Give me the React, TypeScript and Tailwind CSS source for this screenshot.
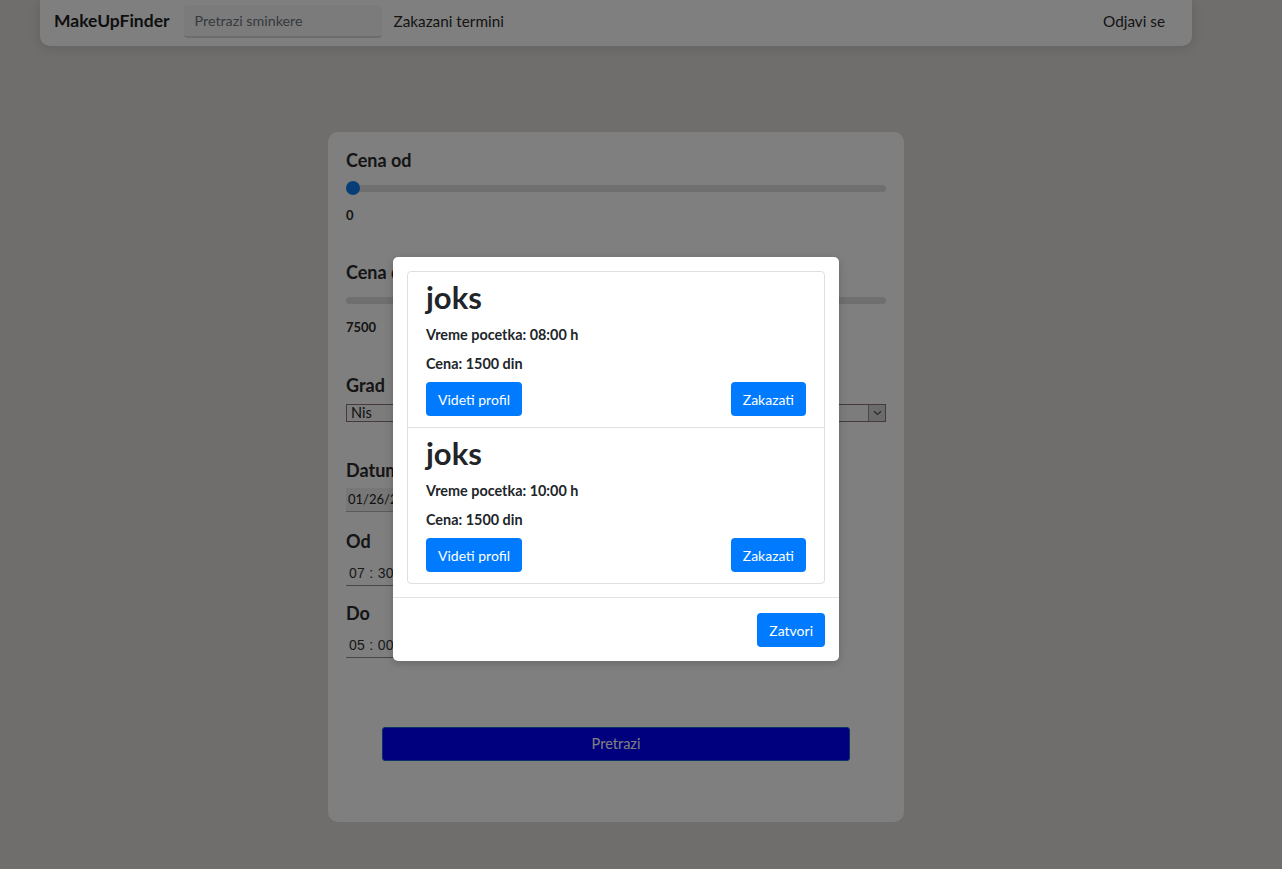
import React from 'react';

type Termin = {
  id: number;
  ime: string;
  vreme: string;
  cena: number;
};

const termini: Termin[] = [
  { id: 1, ime: 'joks', vreme: '08:00', cena: 1500 },
  { id: 2, ime: 'joks', vreme: '10:00', cena: 1500 },
];

// simple range look-alike, value as a fraction of the track
function Slider({ value }: { value: number }) {
  return (
    <div className="relative h-[14px] flex items-center">
      <div className="w-full h-[7px] rounded-full bg-[#dedede]" />
      <div
        className="absolute top-0 h-[14px] w-[14px] rounded-full bg-[#0f7bf0]"
        style={{ left: `calc(${value * 100}% - ${value * 14}px)` }}
      />
    </div>
  );
}

function Label({ children, className = '' }: { children: React.ReactNode; className?: string }) {
  return <div className={`text-[18px] font-bold leading-[20px] text-[#2a2a2a] ${className}`}>{children}</div>;
}

export default function App() {
  return (
    <div className="relative h-[869px] w-full overflow-hidden bg-[#dedcd8] font-['Lato',sans-serif]">
      {/* navbar */}
      <nav className="ml-[40px] w-[1152px] h-[46px] bg-white rounded-b-[10px] shadow-[0_2px_12px_rgba(0,0,0,0.12)] flex items-center pl-[14px] pr-[27px] pb-[3px]">
        <span className="text-[17.5px] font-bold text-[#1e1e1e]">MakeUpFinder</span>
        <div className="ml-[14px] w-[198px] h-[33px] bg-[#f6f6f6] rounded-[4px] border-b-2 border-[#d8d8d8] flex items-center px-[11px] text-[14.3px] text-[#6c757d]">
          Pretrazi sminkere
        </div>
        <span className="ml-[12px] text-[15.3px] text-[#2a2a2a]">Zakazani termini</span>
        <span className="ml-auto text-[15.3px] text-[#2a2a2a]">Odjavi se</span>
      </nav>

      {/* search form */}
      <div className="mt-[86px] ml-[328px] w-[576px] h-[690px] bg-white rounded-[10px] px-[18px] pt-[18px]">
        <Label>Cena od</Label>
        <div className="mt-[11px]">
          <Slider value={0} />
        </div>
        <div className="mt-[12px] h-[16px] text-[13px] font-bold leading-[16px] text-[#2a2a2a]">0</div>

        <Label className="mt-[39px]">Cena do</Label>
        <div className="mt-[11px]">
          <Slider value={0.5} />
        </div>
        <div className="mt-[12px] h-[16px] text-[13px] font-bold leading-[16px] text-[#2a2a2a]">7500</div>

        <Label className="mt-[40px]">Grad</Label>
        <div className="mt-[9px] h-[18px] border border-[#8f7380] bg-[#f8f8f8] flex items-stretch">
          <span className="flex-1 pl-[4px] text-[14.5px] leading-[16px] text-[#222]">Nis</span>
          <span className="w-[17px] bg-[#d6d6d6] border-l border-[#8f8f8f] flex items-center justify-center">
            <svg width="9" height="6" viewBox="0 0 9 6" fill="none">
              <path d="M1 1.2 4.5 4.5 8 1.2" stroke="#555" strokeWidth="1.2" />
            </svg>
          </span>
        </div>

        <Label className="mt-[38px]">Datum</Label>
        <div className="mt-[8px] w-[150px] h-[24px] bg-[#eeeeee] border-b border-[#b4b4b4] flex items-center pl-[2px] text-[13px] text-[#222]">
          01/26/2021
        </div>

        <Label className="mt-[19px]">Od</Label>
        <div className="mt-[10px] w-[140px] h-[25px] border-b border-[#8e8e8e] flex items-center pl-[3px] font-['Liberation_Sans',sans-serif] text-[14px] text-[#333] tracking-[0.3px]">
          07 : 30 PM
        </div>

        <Label className="mt-[17px]">Do</Label>
        <div className="mt-[10px] w-[140px] h-[25px] border-b border-[#8e8e8e] flex items-center pl-[3px] font-['Liberation_Sans',sans-serif] text-[14px] text-[#333] tracking-[0.3px]">
          05 : 00 PM
        </div>

        <button className="mt-[69px] mx-auto block w-[468px] h-[34px] bg-[#0000ff] border border-[#1a5fd0] rounded-[3px] text-[14.5px] text-white">
          Pretrazi
        </button>
      </div>

      {/* modal backdrop */}
      <div className="absolute inset-0 bg-black/50" />

      {/* modal */}
      <div className="absolute left-[393px] top-[257px] w-[446px] bg-white rounded-[5px] shadow-[0_2px_8px_rgba(0,0,0,0.2)]">
        <div className="p-[14px] pb-[13px]">
          <div className="border border-[#dfdfdf] rounded-[4px] divide-y divide-[#dfdfdf]">
            {termini.map((t) => (
              <div key={t.id} className="px-[18px] pt-[6px] pb-[11px]">
                <h2 className="text-[31px] font-bold leading-[38px] text-[#212529]">{t.ime}</h2>
                <p className="mt-[8px] text-[14.4px] font-bold leading-[21px] text-[#212529]">
                  Vreme pocetka: {t.vreme} h
                </p>
                <p className="mt-[8px] text-[14.4px] font-bold leading-[21px] text-[#212529]">
                  Cena: {t.cena} din
                </p>
                <div className="mt-[8px] flex justify-between">
                  <button className="h-[34px] px-[12px] bg-[#007bff] rounded-[4px] text-[14px] text-white">
                    Videti profil
                  </button>
                  <button className="h-[34px] px-[12px] bg-[#007bff] rounded-[4px] text-[14px] text-white">
                    Zakazati
                  </button>
                </div>
              </div>
            ))}
          </div>
        </div>
        <div className="border-t border-[#e3e3e3] pt-[15px] pb-[14px] pr-[14px] flex justify-end">
          <button className="h-[34px] px-[12px] bg-[#007bff] rounded-[4px] text-[14px] text-white">Zatvori</button>
        </div>
      </div>
    </div>
  );
}
